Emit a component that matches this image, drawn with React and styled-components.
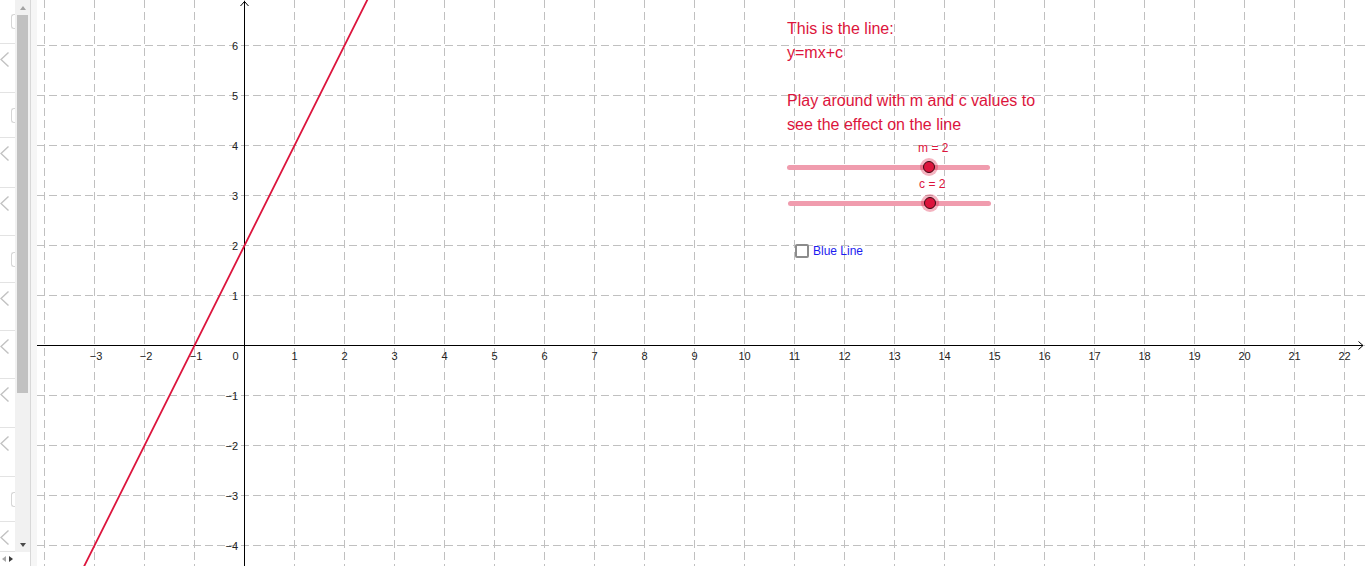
import React from 'react'
import styled, { createGlobalStyle } from 'styled-components'

const RED = '#dc143c'
const UNIT = 50
const OX = 244.5
const OY = 345.5
const LEFT = 37
const px = x => OX + x * UNIT
const py = y => OY - y * UNIT

const rows = [
  { h: 44, kind: 'box' },
  { h: 49, kind: 'chev' },
  { h: 45, kind: 'box' },
  { h: 50, kind: 'chev' },
  { h: 48, kind: 'chev' },
  { h: 47, kind: 'box' },
  { h: 48, kind: 'chev' },
  { h: 48, kind: 'chev' },
  { h: 49, kind: 'chev' },
  { h: 49, kind: 'chev' },
  { h: 45, kind: 'box' },
  { h: 30, kind: 'chev' },
]

const xTicks = []
for (let k = -4; k <= 22; k++) xTicks.push(k)
const yTicks = []
for (let k = -4; k <= 6; k++) yTicks.push(k)

const fmt = n => (n < 0 ? '\u2212' + Math.abs(n) : String(n))

const GlobalStyle = createGlobalStyle`
  html, body { margin: 0; padding: 0; background: #fff; }
  body { font-family: "Liberation Sans", Arial, sans-serif; overflow: hidden; }
`

const Page = styled.div`
  display: flex;
  width: 1366px;
  height: 566px;
  overflow: hidden;
  background: #fff;
`

const AlgebraPanel = styled.div`
  width: 30px;
  flex: none;
  display: flex;
  flex-direction: column;
  border-right: 1px solid #d8d8d8;
`

const AlgebraBody = styled.div`
  height: 552px;
  display: flex;
`

const Rows = styled.div`
  width: 15px;
  flex: none;
  display: flex;
  flex-direction: column;
  overflow: hidden;
`

const Row = styled.div`
  box-sizing: border-box;
  height: ${p => p.h}px;
  flex: none;
  border-bottom: 1px solid #e3e3e3;
  display: flex;
  align-items: ${p => (p.kind === 'box' ? 'center' : 'flex-start')};
  padding-top: ${p => (p.kind === 'box' ? 0 : 8)}px;
`

const InputStub = styled.div`
  box-sizing: border-box;
  margin-left: 11px;
  width: 6px;
  height: 15px;
  border: 1px solid #d6d6d6;
  border-right: none;
  border-radius: 3px 0 0 3px;
`

const VScroll = styled.div`
  width: 15px;
  flex: none;
  background: #f1f1f1;
  display: flex;
  flex-direction: column;
`

const ScrollButton = styled.div`
  height: 15px;
  flex: none;
  display: flex;
  align-items: center;
  justify-content: center;
`

const Triangle = styled.span`
  width: 0;
  height: 0;
  border-left: ${p => (p.dir === 'right' ? `4px solid ${p.color}` : p.dir === 'left' ? 'none' : '3.5px solid transparent')};
  border-right: ${p => (p.dir === 'left' ? `4px solid ${p.color}` : p.dir === 'right' ? 'none' : '3.5px solid transparent')};
  border-top: ${p => (p.dir === 'down' ? `4px solid ${p.color}` : p.dir === 'up' ? 'none' : '3.5px solid transparent')};
  border-bottom: ${p => (p.dir === 'up' ? `4px solid ${p.color}` : p.dir === 'down' ? 'none' : '3.5px solid transparent')};
`

const ScrollTrack = styled.div`
  flex: 1;
  display: flex;
  flex-direction: column;
`

const Thumb = styled.div`
  margin: 0 2px 0 2px;
  height: 378px;
  background: #c1c1c1;
`

const HScroll = styled.div`
  flex: 1;
  display: flex;
  align-items: center;
  gap: 3px;
  padding-left: 2px;
`

const Splitter = styled.div`
  width: 6px;
  flex: none;
  background: #f6f6f6;
`

const GraphView = styled.div`
  position: relative;
  flex: 1;
  height: 566px;
  overflow: hidden;
`

const Canvas = styled.svg`
  display: block;
  width: 100%;
  height: 100%;
`

const TextBlock = styled.div`
  position: absolute;
  left: ${787 - LEFT}px;
  top: 17px;
  color: ${RED};
  font-size: 16px;
  line-height: 24px;
  white-space: pre;
`

const SliderWrap = styled.div`
  position: absolute;
  left: ${p => p.x - LEFT}px;
  top: ${p => p.y - 9}px;
  width: ${p => p.w}px;
  height: 18px;
  display: flex;
  align-items: center;
`

const Track = styled.div`
  width: 100%;
  height: 5px;
  border-radius: 3px;
  background: #f09cae;
`

const Knob = styled.div`
  position: absolute;
  top: 0;
  width: 18px;
  height: 18px;
  margin-left: -9px;
  border-radius: 50%;
  background: rgba(220, 20, 60, 0.32);
  display: flex;
  align-items: center;
  justify-content: center;
`

const KnobDot = styled.div`
  box-sizing: border-box;
  width: 12px;
  height: 12px;
  border-radius: 50%;
  background: ${RED};
  border: 1px solid #3a0812;
`

const SliderLabel = styled.div`
  position: absolute;
  top: -17px;
  color: ${RED};
  font-size: 12px;
  line-height: 14px;
  white-space: nowrap;
`

const CheckRow = styled.label`
  position: absolute;
  left: ${795 - LEFT}px;
  top: 244px;
  display: flex;
  align-items: center;
  gap: 4px;
  color: #1c1cf0;
  font-size: 12px;
  line-height: 14px;
`

const CheckBox = styled.span`
  box-sizing: border-box;
  width: 14px;
  height: 14px;
  border: 2px solid #8c8c8c;
  border-radius: 2px;
  background: #fff;
`

function Chevron() {
  return (
    <svg width="9" height="15" viewBox="0 0 9 15">
      <polyline points="8.5,0.5 1,7.5 8.5,14.5" fill="none" stroke="#c2c2c2" strokeWidth="1.4" />
    </svg>
  )
}

function Slider({ x, y, w, min, max, value, name }) {
  const pos = ((value - min) / (max - min)) * w
  return (
    <SliderWrap x={x} y={y} w={w}>
      <Track />
      <SliderLabel style={{ left: pos - 11 }}>{name} = {value}</SliderLabel>
      <Knob style={{ left: pos }}>
        <KnobDot />
      </Knob>
    </SliderWrap>
  )
}

function Graph() {
  const f = x => 2 * x + 2
  const xa = -3.4
  const xb = 2.6
  return (
    <Canvas viewBox={`${LEFT} 0 ${1366 - LEFT} 566`}>
      <g stroke="#c0c0c0" strokeWidth="1" strokeDasharray="8 4">
        {xTicks.map(k => (
          <line key={'v' + k} x1={px(k)} y1={0} x2={px(k)} y2={566} />
        ))}
        {yTicks.map(k => (
          <line key={'h' + k} x1={LEFT} y1={py(k)} x2={1366} y2={py(k)} />
        ))}
      </g>
      <g stroke="#000" strokeWidth="1" fill="none">
        <line x1={LEFT} y1={OY} x2={1363} y2={OY} />
        <polyline points={`1358.5,341.5 1363,${OY} 1358.5,349.5`} />
        <line x1={OX} y1={566} x2={OX} y2={1} />
        <polyline points={`240.5,6 ${OX},1.5 248.5,6`} />
      </g>
      <g fill="#222" fontSize="11" fontFamily='"Liberation Sans", Arial, sans-serif'>
        {xTicks.filter(k => k !== 0 && k > -4).map(k => (
          <text key={'lx' + k} x={px(k) + (k < 0 ? 1.5 : 0)} y={359.5} textAnchor="middle">{fmt(k)}</text>
        ))}
        <text x={235.5} y={359.5} textAnchor="middle">0</text>
        {yTicks.filter(k => k !== 0).map(k => (
          <text key={'ly' + k} x={238} y={py(k) + 4} textAnchor="end">{fmt(k)}</text>
        ))}
      </g>
      <line x1={px(xa)} y1={py(f(xa))} x2={px(xb)} y2={py(f(xb))} stroke={RED} strokeWidth="1.8" />
    </Canvas>
  )
}

export default function App() {
  return (
    <Page>
      <GlobalStyle />
      <AlgebraPanel>
        <AlgebraBody>
          <Rows>
            {rows.map((r, i) => (
              <Row key={i} h={r.h} kind={r.kind}>
                {r.kind === 'box' ? <InputStub /> : <Chevron />}
              </Row>
            ))}
          </Rows>
          <VScroll>
            <ScrollButton>
              <Triangle dir="up" color="#a3a3a3" />
            </ScrollButton>
            <ScrollTrack>
              <Thumb />
            </ScrollTrack>
            <ScrollButton>
              <Triangle dir="down" color="#4a4a4a" />
            </ScrollButton>
          </VScroll>
        </AlgebraBody>
        <HScroll>
          <Triangle dir="left" color="#a8a8a8" />
          <Triangle dir="right" color="#3c3c3c" />
        </HScroll>
      </AlgebraPanel>
      <Splitter />
      <GraphView>
        <Graph />
        <TextBlock>{'This is the line:\ny=mx+c\n\nPlay around with m and c values to\nsee the effect on the line'}</TextBlock>
        <Slider x={787} y={167} w={203} min={-5} max={5} value={2} name="m" />
        <Slider x={788} y={203} w={203} min={-5} max={5} value={2} name="c" />
        <CheckRow>
          <CheckBox />
          Blue Line
        </CheckRow>
      </GraphView>
    </Page>
  )
}
